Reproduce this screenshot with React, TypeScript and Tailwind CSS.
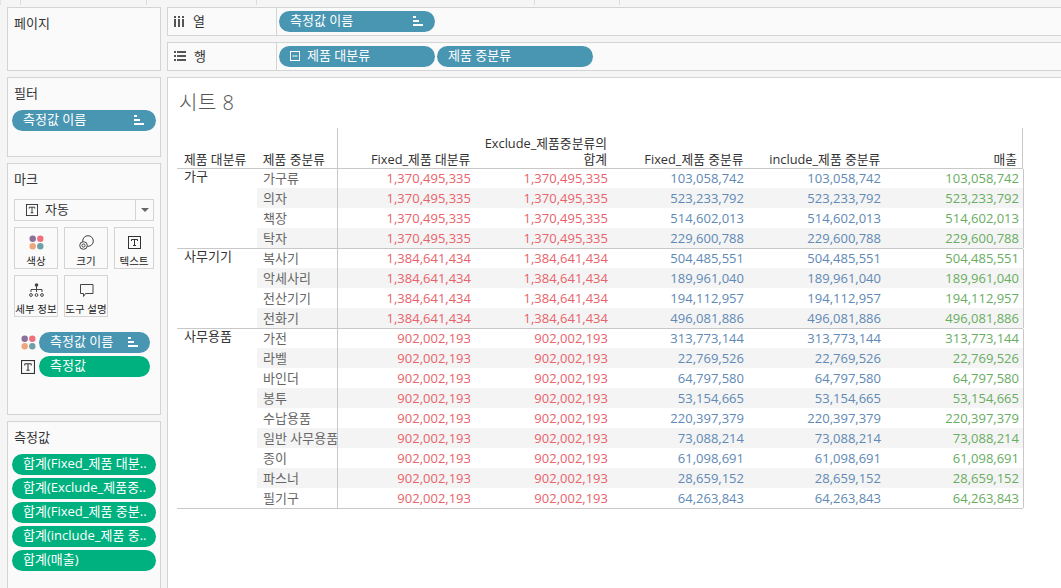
import type { ReactNode } from "react";

const FONT = "font-['Open_Sans','Noto_Sans_CJK_KR',sans-serif]";

type Row = { name: string; values: [string, string, string] };
type Group = { name: string; total: string; rows: Row[] };

const row = (name: string, a: string): Row => ({ name, values: [a, a, a] });

const groups: Group[] = [
  {
    name: "가구",
    total: "1,370,495,335",
    rows: [
      row("가구류", "103,058,742"),
      row("의자", "523,233,792"),
      row("책장", "514,602,013"),
      row("탁자", "229,600,788"),
    ],
  },
  {
    name: "사무기기",
    total: "1,384,641,434",
    rows: [
      row("복사기", "504,485,551"),
      row("악세사리", "189,961,040"),
      row("전산기기", "194,112,957"),
      row("전화기", "496,081,886"),
    ],
  },
  {
    name: "사무용품",
    total: "902,002,193",
    rows: [
      row("가전", "313,773,144"),
      row("라벨", "22,769,526"),
      row("바인더", "64,797,580"),
      row("봉투", "53,154,665"),
      row("수납용품", "220,397,379"),
      row("일반 사무용품", "73,088,214"),
      row("종이", "61,098,691"),
      row("파스너", "28,659,152"),
      row("필기구", "64,263,843"),
    ],
  },
];

const SortIcon = () => (
  <svg width="11" height="11" viewBox="0 0 11 11" fill="#fff" className="shrink-0">
    <rect x="1" y="0" width="3" height="2" />
    <rect x="1" y="4" width="6" height="2" />
    <rect x="1" y="8" width="10" height="2" />
  </svg>
);

const TextIcon = ({ size = 13 }: { size?: number }) => (
  <svg width={size} height={size} viewBox="0 0 13 13" fill="none" stroke="#333" className="shrink-0">
    <rect x="0.5" y="0.5" width="12" height="12" />
    <path d="M3.5 3.5h6M6.5 3.5v6M5 9.5h3M3.5 3.5v1.5M9.5 3.5v1.5" />
  </svg>
);

const DotsIcon = () => (
  <svg width="15" height="15" viewBox="0 0 15 15" className="shrink-0">
    <circle cx="3.7" cy="3.7" r="3.2" fill="#8a7199" />
    <circle cx="11.3" cy="3.7" r="3.2" fill="#ef6f7c" />
    <circle cx="3.7" cy="11.3" r="3.2" fill="#efa67c" />
    <circle cx="11.3" cy="11.3" r="3.2" fill="#6e9fa6" />
  </svg>
);

const SizeIcon = () => (
  <svg width="15" height="15" viewBox="0 0 15 15" fill="none" stroke="#444" className="shrink-0">
    <circle cx="9" cy="6" r="5.3" />
    <circle cx="4.5" cy="10.5" r="3.8" fill="#fafafa" />
    <circle cx="4.5" cy="10.5" r="1.6" />
  </svg>
);

const DetailIcon = () => (
  <svg width="15" height="15" viewBox="0 0 15 15" fill="none" stroke="#444" className="shrink-0">
    <circle cx="7.5" cy="2" r="1.8" fill="#444" stroke="none" />
    <path d="M7.5 3v6M2 9V6.5h11V9" />
    <circle cx="2" cy="12" r="1.4" />
    <circle cx="7.5" cy="12" r="1.4" />
    <circle cx="13" cy="12" r="1.4" />
  </svg>
);

const BubbleIcon = () => (
  <svg width="15" height="15" viewBox="0 0 15 15" fill="none" stroke="#444" className="shrink-0">
    <path d="M1.5 1.5h12.5v9H6.5L4.5 13.5v-3h-3z" />
  </svg>
);

const Pill = ({
  label,
  color = "blue",
  trailing,
  leading,
  className = "",
}: {
  label: string;
  color?: "blue" | "green";
  trailing?: ReactNode;
  leading?: ReactNode;
  className?: string;
}) => (
  <div
    className={`flex h-[21px] items-center justify-between rounded-full pl-[11px] pr-[12px] text-[13px] text-white ${
      color === "blue" ? "bg-[#4996b2]" : "bg-[#00b180]"
    } ${className}`}
  >
    <span className="flex -translate-y-px items-center gap-[7px] whitespace-nowrap">
      {leading}
      {label}
    </span>
    {trailing}
  </div>
);

const Panel = ({ title, className = "", children }: { title: string; className?: string; children?: ReactNode }) => (
  <div className={`shrink-0 border border-[#d4d4d4] bg-[#fafafa] px-[4px] pt-[5px] ${className}`}>
    <div className="h-[21px] pl-[2px] text-[13px] leading-[20px] text-[#333]">{title}</div>
    {children}
  </div>
);

const MarkCard = ({ icon, label, className = "w-[44px]" }: { icon: ReactNode; label: string; className?: string }) => (
  <div className={`flex h-[42px] flex-col items-center border border-[#d4d4d4] pt-[6px] ${className}`}>
    <div className="flex h-[16px] items-center">{icon}</div>
    <div className="mt-[5px] whitespace-nowrap text-[10.5px] leading-[12px] text-[#222]">{label}</div>
  </div>
);

const Shelf = ({ icon, title, children }: { icon: ReactNode; title: string; children: ReactNode }) => (
  <div className="flex h-[29px] border border-r-0 border-[#d4d4d4] bg-[#fafafa]">
    <div className="flex w-[109px] shrink-0 items-center gap-[8px] border-r border-[#d4d4d4] pl-[6px] text-[13px] text-[#333]">
      {icon}
      {title}
    </div>
    <div className="flex items-center gap-[2px] pl-[2px]">{children}</div>
  </div>
);

const headers = ["Fixed_제품 대분류", "Exclude_제품중분류의 합계", "Fixed_제품 중분류", "include_제품 중분류", "매출"];
const widths = ["w-[138px]", "w-[137px]", "w-[137px]", "w-[137px]", "w-[137px]"];

export default function App() {
  return (
    <div className={`flex h-[588px] w-[1061px] flex-col overflow-hidden bg-[#f5f5f5] ${FONT}`}>
      {/* top strip */}
      <div className="flex h-[5px] shrink-0 border-l border-[#e2e2e2]">
        <div className="w-[20px] border-r border-[#dcdcdc]" />
        <div className="w-[126px] border-r border-[#dcdcdc]" />
        <div className="w-[110px] border-r border-[#dcdcdc]" />
        <div className="w-[278px] border-r border-[#dcdcdc]" />
        <div className="w-[85px] border-r border-[#dcdcdc]" />
      </div>

      <div className="mt-[2px] flex min-h-0 flex-1 gap-[6px] pl-[7px]">
        {/* left cards */}
        <div className="flex w-[154px] shrink-0 flex-col gap-[6px]">
          <Panel title="페이지" className="h-[64px]" />
          <Panel title="필터" className="h-[80px]">
            <Pill label="측정값 이름" trailing={<SortIcon />} className="mt-[6px]" />
          </Panel>
          <Panel title="마크" className="h-[252px]">
            <div className="mt-[9px] flex flex-col px-[2px]">
              <div className="flex h-[22px] items-center border border-[#d4d4d4]">
                <div className="flex flex-1 items-center gap-[7px] pl-[11px] text-[13px] text-[#333]">
                  <TextIcon size={12} />
                  자동
                </div>
                <div className="flex h-full w-[18px] items-center justify-center border-l border-[#d4d4d4]">
                  <div className="h-0 w-0 border-x-[4px] border-t-[4px] border-x-transparent border-t-[#666]" />
                </div>
              </div>
              <div className="mt-[6px] flex gap-[6px]">
                <MarkCard icon={<DotsIcon />} label="색상" />
                <MarkCard icon={<SizeIcon />} label="크기" />
                <MarkCard icon={<TextIcon />} label="텍스트" className="w-[40px]" />
              </div>
              <div className="mt-[6px] flex gap-[6px]">
                <MarkCard icon={<DetailIcon />} label="세부 정보" />
                <MarkCard icon={<BubbleIcon />} label="도구 설명" />
              </div>
              <div className="mt-[15px] flex flex-col gap-[3px] pl-[7px] pr-[4px]">
                <div className="flex items-center gap-[3px]">
                  <DotsIcon />
                  <Pill label="측정값 이름" trailing={<SortIcon />} className="flex-1" />
                </div>
                <div className="flex items-center gap-[4px]">
                  <TextIcon size={14} />
                  <Pill label="측정값" color="green" className="flex-1" />
                </div>
              </div>
            </div>
          </Panel>
          <Panel title="측정값" className="flex-1 border-b-0">
            <div className="mt-[6px] flex flex-col gap-[3px]">
              <Pill color="green" label="합계(Fixed_제품 대분.." />
              <Pill color="green" label="합계(Exclude_제품중.." />
              <Pill color="green" label="합계(Fixed_제품 중분.." />
              <Pill color="green" label="합계(include_제품 중.." />
              <Pill color="green" label="합계(매출)" />
            </div>
          </Panel>
        </div>

        {/* right side */}
        <div className="flex min-w-0 flex-1 flex-col gap-[6px]">
          <Shelf
            title="열"
            icon={
              <svg width="11" height="11" viewBox="0 0 11 11" fill="#555" className="shrink-0">
                <rect x="0" y="0" width="2" height="2" />
                <rect x="4" y="0" width="2" height="2" />
                <rect x="8" y="0" width="2" height="2" />
                <rect x="0" y="3" width="2" height="8" />
                <rect x="4" y="3" width="2" height="8" />
                <rect x="8" y="3" width="2" height="8" />
              </svg>
            }
          >
            <Pill label="측정값 이름" trailing={<SortIcon />} className="w-[156px]" />
          </Shelf>
          <Shelf
            title="행"
            icon={
              <svg width="12" height="11" viewBox="0 0 12 11" fill="#555" className="shrink-0">
                <rect x="0" y="0" width="2" height="2" />
                <rect x="3" y="0" width="9" height="2" />
                <rect x="0" y="4" width="2" height="2" />
                <rect x="3" y="4" width="9" height="2" />
                <rect x="0" y="8" width="2" height="2" />
                <rect x="3" y="8" width="9" height="2" />
              </svg>
            }
          >
            <Pill
              label="제품 대분류"
              className="w-[156px]"
              leading={
                <svg width="10" height="10" viewBox="0 0 10 10" fill="none" stroke="#fff" className="shrink-0">
                  <rect x="0.5" y="0.5" width="9" height="9" />
                  <path d="M2.5 5h5" />
                </svg>
              }
            />
            <Pill label="제품 중분류" className="w-[156px]" />
          </Shelf>

          {/* sheet */}
          <div className="min-h-0 flex-1 border border-b-0 border-r-0 border-[#d4d4d4] bg-white pl-[9px] pt-[11px]">
            <div className="h-[28px] pl-[2px] text-[20px] font-light leading-[28px] tracking-[0.5px] text-[#555]">시트 8</div>
            <div className="mt-[11px] w-[846px]">
              <div className="flex h-[40px] items-end border-r border-[#c8c8c8] pb-[1px] text-[12.8px] leading-[16px] text-[#333]">
                <div className="w-[80px] whitespace-nowrap pl-[7px]">제품 대분류</div>
                <div className="-mb-[1px] h-[40px] w-[81px] whitespace-nowrap border-r border-[#c8c8c8] pl-[6px]">
                  <div className="pt-[23px]">제품 중분류</div>
                </div>
                {headers.map((h, i) => (
                  <div key={h} className={`${widths[i]} whitespace-nowrap pr-[5px] text-right`}>
                    {i === 1 ? (
                      <>
                        Exclude_제품중분류의
                        <br />
                        합계
                      </>
                    ) : (
                      h
                    )}
                  </div>
                ))}
              </div>
              <div className="border-b border-[#c8c8c8]">
                {groups.map((g) => (
                  <div key={g.name} className="flex border-t border-[#c8c8c8]">
                    <div className="w-[80px] shrink-0 pl-[7px] text-[13px] leading-[15px] text-[#333]">{g.name}</div>
                    <div className="flex-1 border-r border-[#c8c8c8]">
                      {g.rows.map((r, i) => (
                        <div
                          key={r.name}
                          className={`flex h-[20px] items-center text-[13px] ${i === 0 ? "-mt-[1px]" : ""} ${
                            i % 2 === 1 ? "bg-[#f4f4f4]" : ""
                          }`}
                        >
                          <div className="h-full w-[81px] shrink-0 whitespace-nowrap border-r border-[#c8c8c8] pl-[6px] leading-[20px] text-[#666]">
                            {r.name}
                          </div>
                          <div className="w-[138px] pr-[5px] pt-[2px] text-right text-[#e8636b]">{g.total}</div>
                          <div className="w-[137px] pr-[5px] pt-[2px] text-right text-[#e8636b]">{g.total}</div>
                          <div className="w-[137px] pr-[6px] pt-[2px] text-right text-[#6089b5]">{r.values[0]}</div>
                          <div className="w-[137px] pr-[6px] pt-[2px] text-right text-[#6089b5]">{r.values[1]}</div>
                          <div className="w-[136px] pr-[4px] pt-[2px] text-right text-[#69ad62]">{r.values[2]}</div>
                        </div>
                      ))}
                    </div>
                  </div>
                ))}
              </div>
            </div>
          </div>
        </div>
      </div>
    </div>
  );
}
